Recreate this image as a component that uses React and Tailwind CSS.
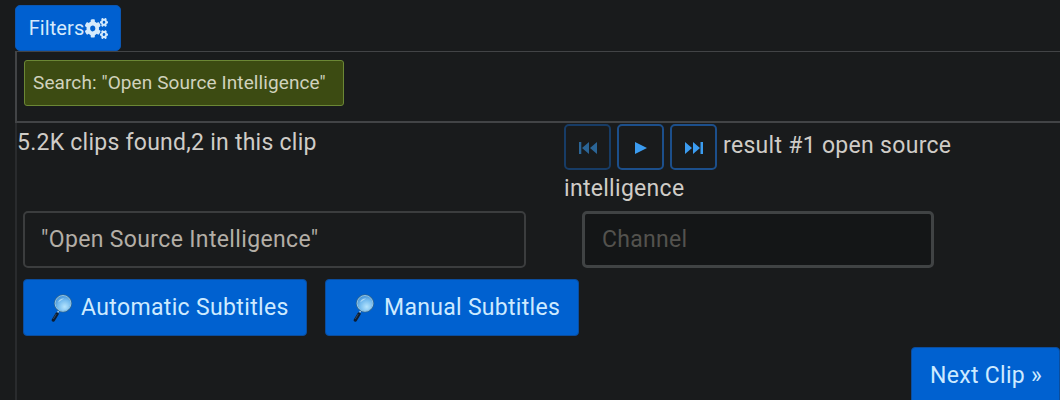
import { FaCogs } from "react-icons/fa";

function Magnifier({ id }) {
  return (
    <svg className="h-[28px] w-[22px] shrink-0" viewBox="0 0 22 28">
      <defs>
        <radialGradient id={id} cx="0.6" cy="0.7" r="0.75">
          <stop offset="0" stopColor="#b5e4fd" />
          <stop offset="0.55" stopColor="#71b9ee" />
          <stop offset="1" stopColor="#3485d2" />
        </radialGradient>
      </defs>
      <path d="M7.5 17 5.8 20" stroke="#b8d8ec" strokeWidth="1.5" />
      <path d="M6 20 2.4 26" stroke="#0c1c30" strokeWidth="3.4" strokeLinecap="round" />
      <path d="M5 20.4 2.6 24.5" stroke="#3d5670" strokeWidth="0.8" strokeLinecap="round" />
      <circle cx="12" cy="9.4" r="8.4" fill={`url(#${id})`} stroke="#2b6696" strokeWidth="1.4" />
      <circle cx="12" cy="9.4" r="7.9" fill="none" stroke="#a9d9f4" strokeWidth="0.8" />
      <path d="M7 8.4Q8.5 4.2 13.1 4.5Q10.5 6.2 7 8.4Z" fill="#d9f2ff" opacity="0.6" />
    </svg>
  );
}

function StepButton({ label, dim, children }) {
  return (
    <button
      aria-label={label}
      className={
        "flex h-[46px] w-[47px] items-center justify-center rounded-[5px] border-2 pt-[2px] " +
        (dim ? "border-[#173c66] text-[#2b6596]" : "border-[#1c4f8b] text-[#3b9cf0]")
      }
    >
      <svg className="h-[14px] w-[20px]" viewBox="0 0 20 14" fill="currentColor">
        {children}
      </svg>
    </button>
  );
}

export default function App() {
  return (
    <div className="h-[400px] w-[1060px] overflow-hidden bg-[#191b1c] pl-[15px] font-['Roboto',sans-serif] text-[23px] tracking-[0.3px] text-[#cfccc7]">
      <div className="flex h-[51px] pt-[5px]">
        <button className="flex h-[46px] w-[106px] items-center rounded-[5px] border border-[#0b57b3] bg-[#0060d0] pl-[12px] text-[20px] tracking-[0.1px] text-[#d5eafc]">
          <span className="w-[57px]">Filters</span>
          <FaCogs preserveAspectRatio="none" className="h-[21px] w-[23px] shrink-0" />
        </button>
      </div>
      <div className="h-[72px] border-t border-b-2 border-l-2 border-[#424446] pt-[8px] pl-[7px]">
        <div className="flex h-[46px] w-[320px] items-center rounded-[3px] border border-[#6b8735] bg-[#3c4b12] pt-[1px] pl-[8px] text-[19px] tracking-[0.1px] whitespace-nowrap text-[#d0d2bd]">
          Search: "Open Source Intelligence"
        </div>
      </div>
      <div className="h-[277px] border-l-2 border-[#292b2d]">
        <div className="flex h-[88px] pt-[1px]">
          <div className="w-[547px] pt-[5px] leading-[28px] tracking-[0.25px]">5.2K clips found,2 in this clip</div>
          <div>
            <div className="flex h-[46px] gap-[6px]">
              <StepButton label="First result" dim>
                <path d="M1 1h2.3v12H1zM11 1v12L4 7zM19 1v12l-7-6z" />
              </StepButton>
              <StepButton label="Play">
                <path d="M4 1l12 6-12 6z" />
              </StepButton>
              <StepButton label="Last result">
                <path d="M1 1v12l7-6zM9 1v12l7-6zM16.5 1H19v12h-2.5z" />
              </StepButton>
              <span className="pt-[8px] leading-[28px] whitespace-nowrap">result #1 open source</span>
            </div>
            <div className="pt-[5px] leading-[28px]">intelligence</div>
          </div>
        </div>
        <div className="flex gap-[56px] pl-[6px]">
          <input
            readOnly
            defaultValue={'"Open Source Intelligence"'}
            className="h-[57px] w-[503px] rounded-[5px] border-2 border-[#3b3d3e] bg-[#191b1c] pl-[16px] tracking-[0.35px] text-[#b3aea6] outline-none"
          />
          <input
            readOnly
            placeholder="Channel"
            className="h-[57px] w-[352px] rounded-[5px] border-3 border-[#404344] bg-[#141617] pl-[17px] outline-none placeholder:text-[#53524e]"
          />
        </div>
        <div className="flex gap-[18px] pt-[11px] pl-[6px] text-[#cdeaff]">
          <button className="flex h-[57px] w-[284px] items-center gap-[8px] rounded-[4px] border border-[#0b4d9d] bg-[#0061d0] pt-[1px] pl-[27px] tracking-[0.35px] whitespace-nowrap">
            <Magnifier id="lens-automatic" />
            Automatic Subtitles
          </button>
          <button className="flex h-[57px] w-[254px] items-center gap-[9px] rounded-[4px] border border-[#0b4d9d] bg-[#0061d0] pt-[1px] pl-[27px] whitespace-nowrap">
            <Magnifier id="lens-manual" />
            Manual Subtitles
          </button>
        </div>
        <div className="flex justify-end pt-[11px]">
          <button className="h-[57px] w-[149px] rounded-[4px] border border-[#0b4d9d] bg-[#0061d0] pt-[2px] pl-[18px] text-left whitespace-nowrap text-[#cdeaff]">
            Next Clip »
          </button>
        </div>
      </div>
    </div>
  );
}
